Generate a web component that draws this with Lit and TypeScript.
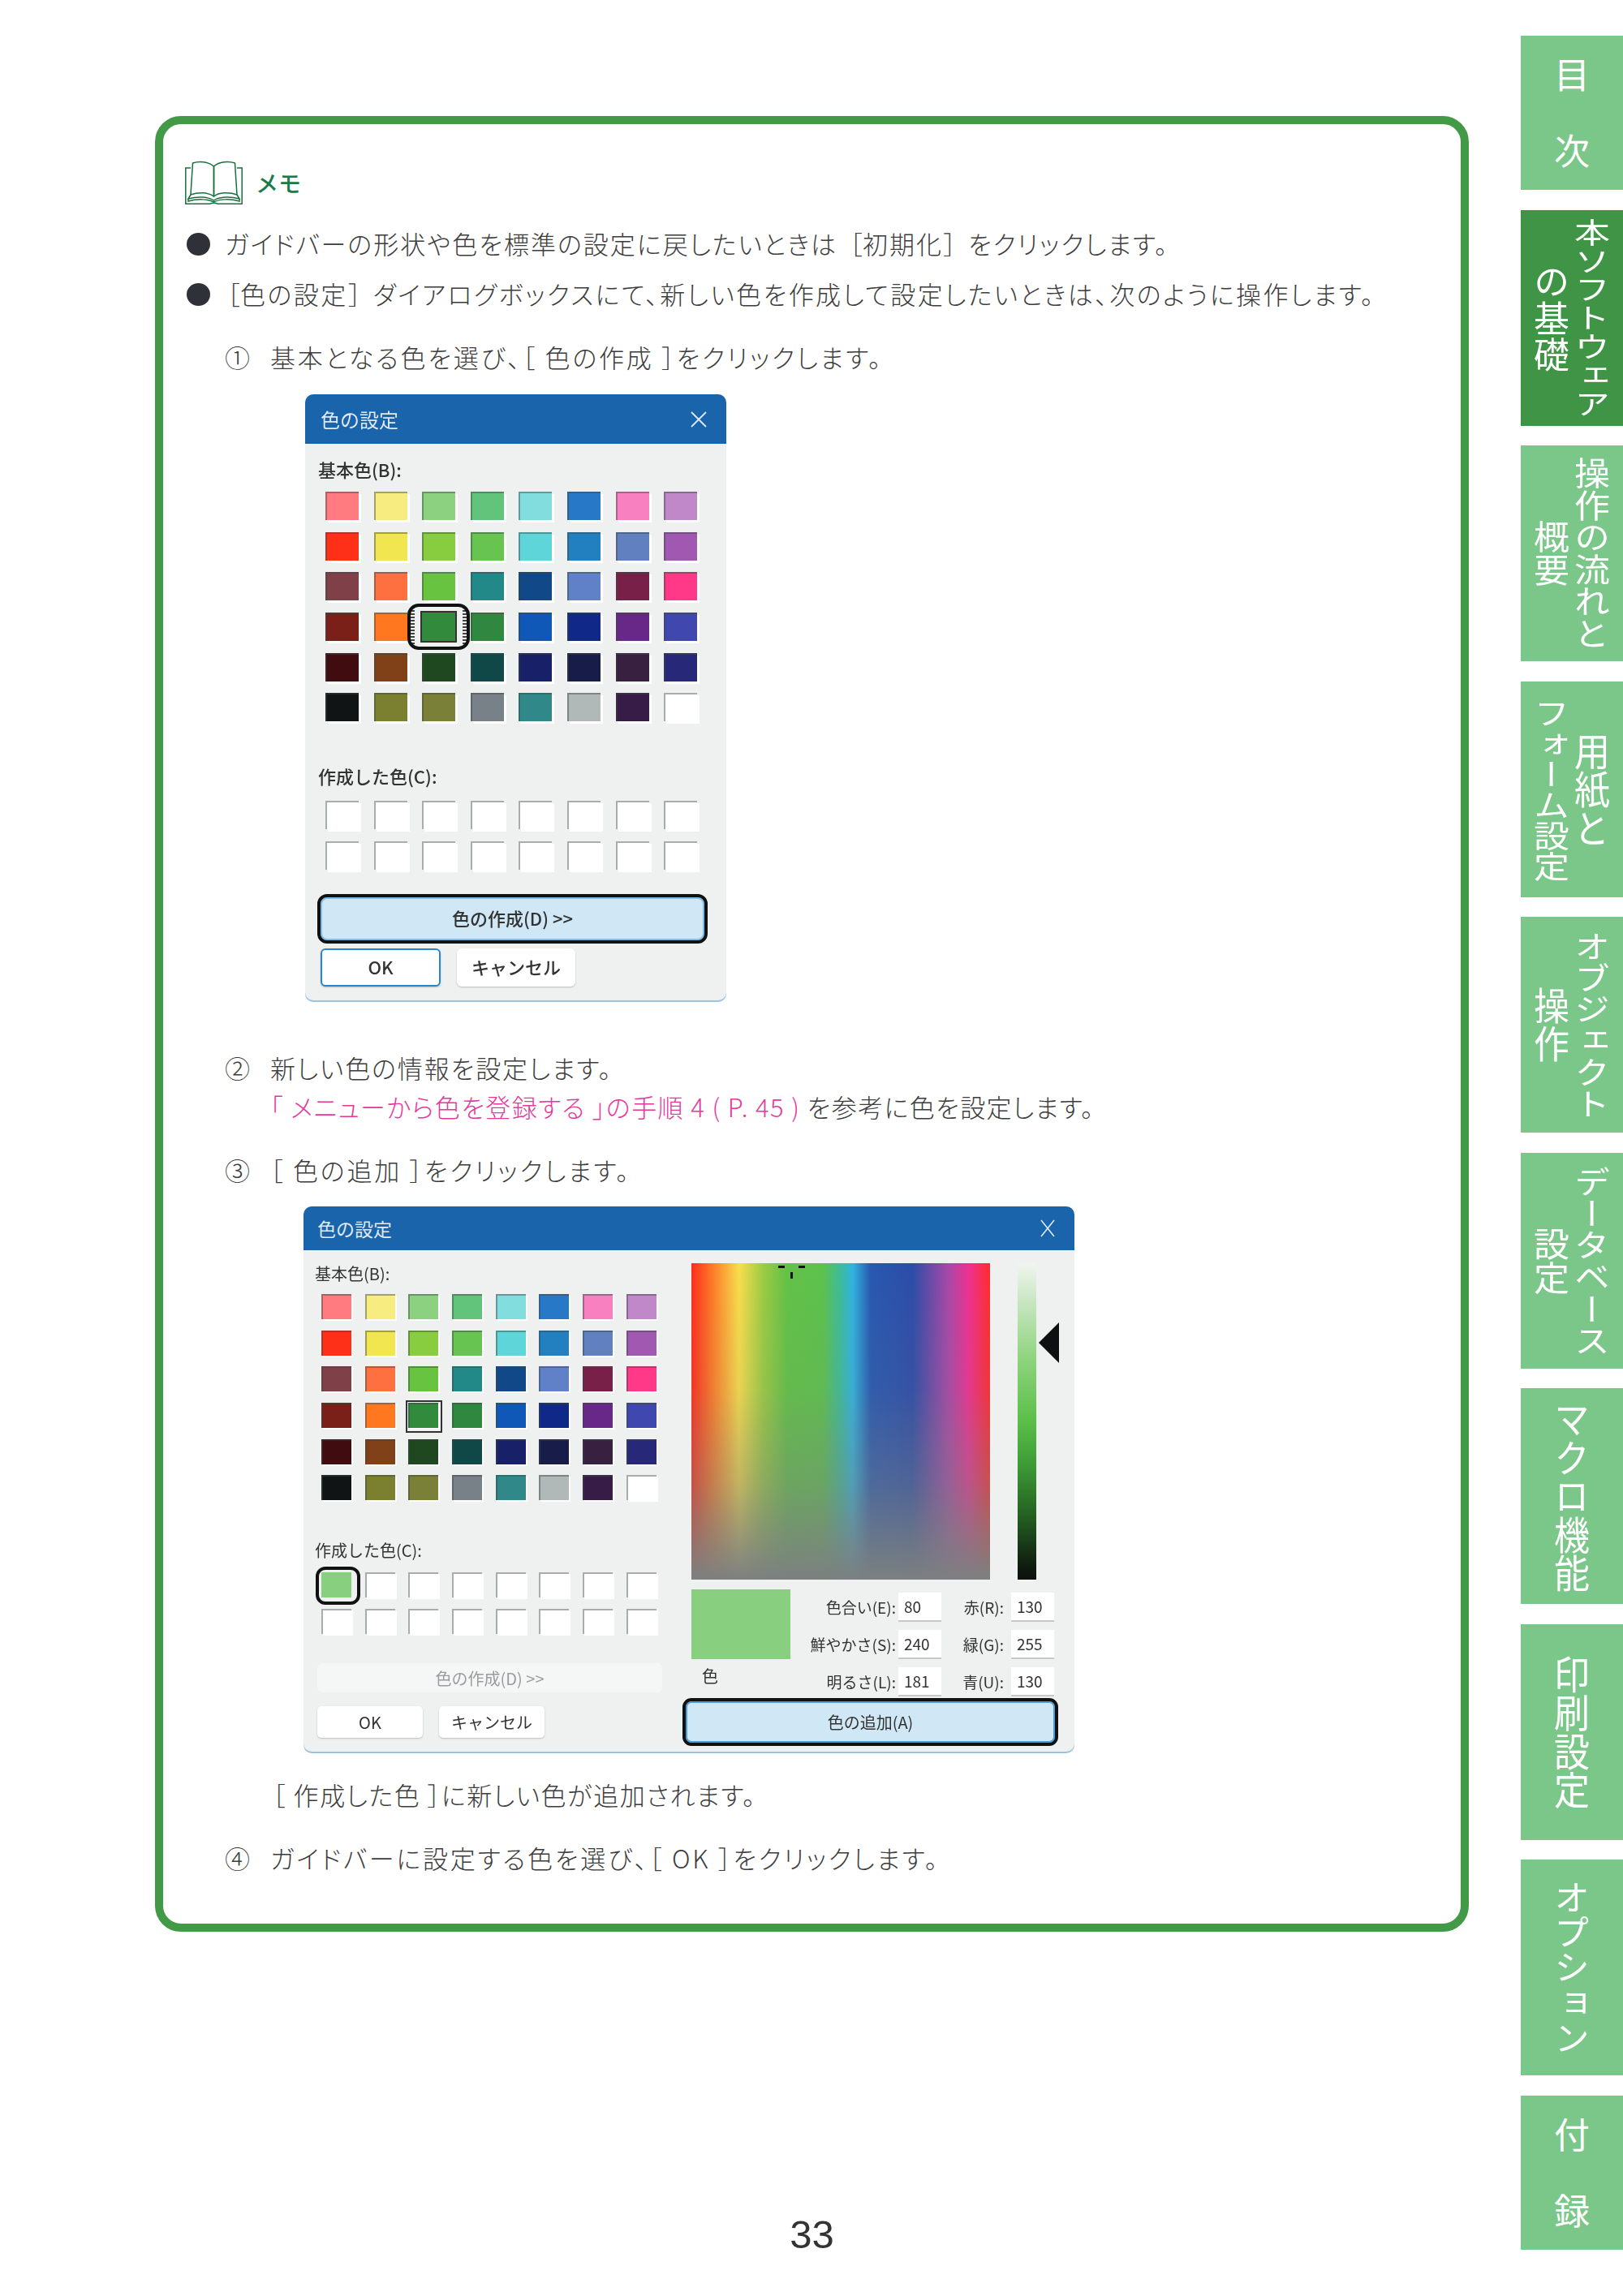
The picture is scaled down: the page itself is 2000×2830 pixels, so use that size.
import { LitElement, html, css } from "lit";
import { customElement } from "lit/decorators.js";

const BASIC = [
  "#ff7b80","#f6ec80","#8bd180","#62c47b","#82dede","#2878c8","#f87fc0","#c088c8",
  "#ff3018","#f2e650","#88cc40","#68c450","#5ed5d8","#2280c0","#6080c0","#a058b0",
  "#804048","#ff7040","#68c440","#228888","#104888","#6080c8","#782048","#ff3888",
  "#7a2018","#ff7820","#328a3c","#308840","#1058b8","#102888","#682888","#4048b0",
  "#400c10","#804018","#204820","#104848","#182068","#181c48","#382040","#282878",
  "#101414","#7a8030","#7a8038","#788088","#308888","#b0b8b8","#381c48","#ffffff",
];

type Tab = { lines: [string, number][]; on?: boolean; ls?: number };
const TABS: Tab[] = [
  { lines: [["目次", 1]], ls: 50 },
  { lines: [["本ソフトウェア", 0.8], ["の基礎", 1.02]], on: true },
  { lines: [["操作の流れと", 0.9], ["概要", 0.93]] },
  { lines: [["用紙と", 1.08], ["フォーム設定", 0.86]] },
  { lines: [["オブジェクト", 0.88], ["操作", 1.05]] },
  { lines: [["データベース", 0.89], ["設定", 0.95]] },
  { lines: [["マクロ機能", 1.08]] },
  { lines: [["印刷設定", 1.08]] },
  { lines: [["オプション", 0.98]] },
  { lines: [["付録", 1]], ls: 50 },
];

@customElement("color-dialog-one")
export class DialogOne extends LitElement {
  static styles = css`
    :host { display: block; }
    .dlg { width: 519px; height: 749px; background: #eff0f0; border-radius: 10px; overflow: hidden; filter: blur(0.6px);
      font-family: "Noto Sans CJK JP", sans-serif; color: #333; font-weight: 500; box-shadow: inset 0 -2px 0 #9cc3e0; }
    .title { height: 61px; background: #1a64ac; color: #dfe9f3; display: flex; align-items: center; justify-content: space-between;
      padding: 0 24px 0 19px; font-size: 24px; font-weight: 400; }
    .body { padding: 18px 23px 0 19px; }
    .lbl { height: 30px; line-height: 26px; font-size: 22px; margin-left: -3px; white-space: nowrap; }
    .grid { display: grid; grid-template-columns: repeat(8, 41px); column-gap: 18.6px; row-gap: 14.7px; margin: 11px 0 0 6px; }
    .sw { height: 35px; box-shadow: inset 2px 2px 0 rgba(60,70,70,.45), 3px 3px 0 #fff; position: relative; }
    .sel { box-shadow: 0 0 0 2px #333; }
    .sel::before { content: ""; position: absolute; inset: -7px -14px; background:
        repeating-linear-gradient(#444 0 2px, transparent 2px 4px) left/5px 100% no-repeat,
        repeating-linear-gradient(#444 0 2px, transparent 2px 4px) right/5px 100% no-repeat; }
    .sel::after { content: ""; position: absolute; inset: -11px -18px; border: 4px solid #111; border-radius: 14px; }
    .lbl2 { margin-top: 54px; }
    .grid2 { margin-top: 14px; }
    .make { margin: 34px 0 0; width: 473px; height: 53px; box-sizing: border-box; padding-bottom: 4px; background: #d0e8f5; border-radius: 8px; outline: 4px solid #111;
      box-shadow: inset 0 0 0 2px #7fbde6; display: flex; align-items: center; justify-content: center; font-size: 22px; }
    .row { display: flex; gap: 20px; margin-top: 10px; }
    .btn { height: 47px; padding-bottom: 4px; display: flex; align-items: center; justify-content: center; font-size: 22px; background: #fff;
      border-radius: 6px; box-sizing: border-box; width: 146px; box-shadow: 0 1px 2px #bbb; }
    .ok { width: 148px; border: 2px solid #2a86c8; }
  `;
  render() {
    return html`<div class="dlg">
      <div class="title"><span>色の設定</span>
        <svg width="20" height="20" viewBox="0 0 20 20"><path d="M1 1L19 19M19 1L1 19" stroke="#dfe9f3" stroke-width="1.8"/></svg></div>
      <div class="body">
        <div class="lbl">基本色(B):</div>
        <div class="grid">${BASIC.map((c, i) => html`<div class="sw ${i === 26 ? "sel" : ""}" style="background:${c}"></div>`)}</div>
        <div class="lbl lbl2">作成した色(C):</div>
        <div class="grid grid2">${Array.from({ length: 16 }, () => html`<div class="sw" style="background:#fff"></div>`)}</div>
        <div class="make">色の作成(D) &gt;&gt;</div>
        <div class="row"><div class="btn ok">OK</div><div class="btn">キャンセル</div></div>
      </div>
    </div>`;
  }
}

@customElement("color-dialog-two")
export class DialogTwo extends LitElement {
  static styles = css`
    :host { display: block; }
    .dlg { width: 950px; height: 674px; background: #eff0f0; border-radius: 10px; overflow: hidden; filter: blur(0.6px);
      font-family: "Noto Sans CJK JP", sans-serif; color: #333; box-shadow: inset 0 -2px 0 #9cc3e0; }
    .title { height: 54px; background: #1a64ac; color: #dfe9f3; display: flex; align-items: center; justify-content: space-between;
      padding: 0 24px 0 17px; font-size: 23px; }
    .cols { display: flex; }
    .left { width: 478px; box-sizing: border-box; padding: 14px 0 0 17px; flex: none; }
    .lbl { height: 30px; line-height: 30px; font-size: 20px; margin-left: -3px; white-space: nowrap; }
    .grid { display: grid; grid-template-columns: repeat(8, 37px); column-gap: 16.7px; row-gap: 13.7px; margin: 10px 0 0 5px; }
    .sw { height: 31px; box-shadow: inset 2px 2px 0 rgba(60,70,70,.45), 2px 2px 0 #fff; position: relative; }
    .sel::after { content: ""; position: absolute; inset: -3px -5px -6px -3px; border: 2px solid #333; }
    .cur { box-shadow: none; }
    .cur::after { content: ""; position: absolute; inset: -7px -11px -9px -7px; border: 4px solid #111; border-radius: 12px; }
    .lbl2 { margin-top: 47px; }
    .grid2 { margin-top: 12px; }
    .make { margin-top: 36px; width: 425px; height: 36px; background: #f5f6f6; border-radius: 6px; color: #9a9d9f;
      display: flex; align-items: center; justify-content: center; font-size: 20px; }
    .row { display: flex; gap: 20px; margin-top: 17px; }
    .btn { width: 130px; height: 39px; background: #fff; border-radius: 5px; box-shadow: 0 1px 2px #bbb;
      display: flex; align-items: center; justify-content: center; font-size: 20px; }
    .right { flex: none; width: 460px; padding-top: 16px; }
    .pick { display: flex; align-items: flex-start; }
    .spec { width: 368px; height: 390px; position: relative; flex: none; background:
        linear-gradient(to bottom, rgba(124,128,128,0) 0%, rgba(124,128,128,.12) 40%, rgba(124,128,128,.45) 70%, rgba(124,128,128,1) 100%),
        linear-gradient(to right, #ff2c1c 0%, #ff7a26 7%, #f8de4c 16%, #9ccc42 24%, #62c246 32%, #5cc24c 44%, #3cbc9c 50%, #30b4e0 54%, #2858b0 60%, #2c4ca8 74%, #a848a8 86%, #f03090 93%, #ff2c2c 100%); }
    .mark { position: absolute; background: #111; }
    .m1 { left: 107px; top: 3px; width: 8px; height: 3px; }
    .m2 { left: 132px; top: 3px; width: 8px; height: 3px; }
    .m3 { left: 122px; top: 11px; width: 3px; height: 8px; }
    .lum { width: 23px; height: 390px; margin-left: 34px; flex: none; background:
        linear-gradient(to bottom, #f0f5ee 0%, #c9e6c2 12%, #8fd47f 30%, #5abf48 50%, #3d9a35 64%, #245f22 80%, #0f1c10 96%, #0c120c 100%); }
    .tri { width: 25px; height: 50px; margin: 73px 0 0 3px; flex: none; }
    .low { display: flex; align-items: flex-start; margin-top: 12px; }
    .pv { width: 122px; flex: none; }
    .swatch { height: 86px; background: #88cf80; }
    .pvl { font-size: 20px; margin: 7px 0 0 13px; line-height: 28px; }
    .fields { display: grid; grid-template-columns: 133px 53px 86px 53px; grid-auto-rows: 34px; row-gap: 12px; margin-top: 4px;
      font-size: 19px; align-items: center; }
    .k { text-align: right; padding-right: 3px; white-space: nowrap; }
    .k2 { padding-right: 9px; }
    .v { background: #fff; height: 34px; line-height: 34px; padding-left: 7px; box-sizing: border-box; box-shadow: 0 2px 0 #c6c9ca; }
    .add { margin: 8px 0 0 -7px; width: 455px; height: 51px; background: #d0e8f5; border-radius: 7px; outline: 4px solid #111;
      box-shadow: inset 0 0 0 2px #4d9ed8; display: flex; align-items: center; justify-content: center; font-size: 20px; }
  `;
  render() {
    const F: [string, string, string, string][] = [
      ["色合い(E):", "80", "赤(R):", "130"],
      ["鮮やかさ(S):", "240", "緑(G):", "255"],
      ["明るさ(L):", "181", "青(U):", "130"],
    ];
    return html`<div class="dlg">
      <div class="title"><span>色の設定</span>
        <svg width="18" height="22" viewBox="0 0 18 22"><path d="M1 1L17 21M17 1L1 21" stroke="#dfe9f3" stroke-width="1.6"/></svg></div>
      <div class="cols">
        <div class="left">
          <div class="lbl">基本色(B):</div>
          <div class="grid">${BASIC.map((c, i) => html`<div class="sw ${i === 26 ? "sel" : ""}" style="background:${c}"></div>`)}</div>
          <div class="lbl lbl2">作成した色(C):</div>
          <div class="grid grid2">${Array.from({ length: 16 }, (_, i) => html`<div class="sw ${i === 0 ? "cur" : ""}" style="background:${i === 0 ? "#88cf80" : "#fff"}"></div>`)}</div>
          <div class="make">色の作成(D) &gt;&gt;</div>
          <div class="row"><div class="btn">OK</div><div class="btn">キャンセル</div></div>
        </div>
        <div class="right">
          <div class="pick">
            <div class="spec"><i class="mark m1"></i><i class="mark m2"></i><i class="mark m3"></i></div>
            <div class="lum"></div>
            <svg class="tri" viewBox="0 0 25 50"><path d="M0 25L25 0V50Z" fill="#0c1010"/></svg>
          </div>
          <div class="low">
            <div class="pv"><div class="swatch"></div><div class="pvl">色</div></div>
            <div class="fields">${F.map((r) => html`
              <div class="k">${r[0]}</div><div class="v">${r[1]}</div>
              <div class="k k2">${r[2]}</div><div class="v">${r[3]}</div>`)}</div>
          </div>
          <div class="add">色の追加(A)</div>
        </div>
      </div>
    </div>`;
  }
}

@customElement("app-root")
export class AppRoot extends LitElement {
  static styles = css`
    :host { display: block; width: 2000px; height: 2830px; background: #fff; overflow: hidden;
      font-family: "Noto Sans CJK JP", sans-serif; color: #3d3d3d; }
    .page { display: flex; align-items: flex-start; width: 2000px; height: 2830px; box-sizing: border-box; }
    .main { width: 1619px; margin: 143px 0 0 191px; flex: none; }
    .card { box-sizing: border-box; height: 2238px; border: 10px solid #439a46; border-radius: 32px; padding: 45px 0 0 27px; }
    .head { display: flex; align-items: flex-start; height: 54px; }
    .book { width: 71px; height: 54px; flex: none; }
    .memo { margin-left: 16px; font-size: 28px; line-height: 54px; font-weight: 500; color: #1d7a48; }
    .t { font-size: 31px; line-height: 48px; font-weight: 300; white-space: nowrap; font-feature-settings: "palt"; letter-spacing: 2.8px; }
    .fw { font-feature-settings: normal; letter-spacing: 0; }
    .b { display: flex; align-items: center; }
    .dot { width: 29px; height: 28px; border-radius: 50%; background: #2f3138; margin: 0 18px 0 2px; flex: none; }
    .b1 { margin-top: 24px; letter-spacing: 2px; }
    .b2 { margin-top: 14px; letter-spacing: 2.45px; }
    .b2 .lead { margin-left: -12px; }
    .b1 .dot, .b2 .dot { position: relative; top: 1px; }
    .s { display: flex; margin-left: 49px; }
    .n { width: 56px; flex: none; letter-spacing: 0; }
    .s1 { margin-top: 30px; }
    .s2 { margin-top: 57px; letter-spacing: 1.9px; }
    .tight { letter-spacing: 1.4px; }
    .s3 { margin-top: 30px; }
    .s4 { margin-top: 30px; }
    .pink { color: #e5399a; }
    .d1 { margin: 22px 0 0 148px; }
    .d2 { margin: 21px 0 0 146px; }
    .res { margin: 27px 0 0 108px; letter-spacing: 1.6px; }
    .num { margin-top: 343px; text-align: center; font: 49px/60px "Liberation Sans", sans-serif; color: #333; }
    .tabs { width: 126px; margin: 44px 0 0 64px; flex: none; display: flex; flex-direction: column; gap: 24.5px; }
    .tab { height: 266px; background: #7bc689; color: #fff; display: flex; flex-direction: row-reverse; justify-content: center; align-items: center; }
    .tab.on { background: #3f9545; }
    .tab.short { height: 190px; }
    .ln { writing-mode: vertical-rl; font-size: 44px; line-height: 50px; white-space: nowrap; flex: none; font-weight: 400; }
  `;
  renderTab(t: Tab) {
    const cls = `tab ${t.on ? "on" : ""} ${t.ls ? "short" : ""}`;
    return html`<div class=${cls}>${t.lines.map(([s, k]) => html`
      <span class="ln" style="transform:scaleY(${k});${t.ls ? `letter-spacing:${t.ls}px;padding-top:${t.ls}px;` : ""}">${s}</span>`)}</div>`;
  }
  render() {
    return html`<div class="page">
      <div class="main">
        <div class="card">
          <div class="head">
            <svg class="book" viewBox="0 0 71 54" fill="none" stroke="#17713f" stroke-width="1.5">
              <path d="M7 9H.8V53.200H31C33 51.800 38 51.800 40 53.200H70.200V9H64"/>
              <path d="M9.500 3C17 .4 29 1 35.500 7V44C29 39 17 38.500 7 42Z"/>
              <path d="M61.500 3C54 .4 42 1 35.500 7V44C42 39 54 38.500 64 42Z"/>
              <path d="M7 42L4 47C15 44 28 44 35.500 49C43 44 56 44 67 47L64 42"/>
              <path d="M4 47V50C15 47 28 47 35.500 51C43 47 56 47 67 50V47"/>
            </svg>
            <span class="memo">メモ</span>
          </div>
          <div class="t b b1"><i class="dot"></i><span>ガイドバーの形状や色を標準の設定に戻したいときは<span class="fw">［</span>初期化<span class="fw">］</span>をクリックします。</span></div>
          <div class="t b b2"><i class="dot"></i><span class="lead"><span class="fw">［</span>色の設定<span class="fw">］</span>ダイアログボックスにて、新しい色を作成して設定したいときは、次のように操作します。</span></div>
          <div class="t s s1"><span class="n">①</span><span>基本となる色を選び、［ 色の作成 ］をクリックします。</span></div>
          <div class="d1"><color-dialog-one></color-dialog-one></div>
          <div class="t s s2"><span class="n">②</span><span>新しい色の情報を設定します。<br><span class="tight"><span class="pink">「 メニューから色を登録する 」の手順 4 ( P. 45 )</span> を参考に色を設定します。</span></span></div>
          <div class="t s s3"><span class="n">③</span><span>［ 色の追加 ］をクリックします。</span></div>
          <div class="d2"><color-dialog-two></color-dialog-two></div>
          <div class="t res">［ 作成した色 ］に新しい色が追加されます。</div>
          <div class="t s s4"><span class="n">④</span><span>ガイドバーに設定する色を選び、［ OK ］をクリックします。</span></div>
        </div>
        <div class="num">33</div>
      </div>
      <div class="tabs">${TABS.map((t) => this.renderTab(t))}</div>
    </div>`;
  }
}
